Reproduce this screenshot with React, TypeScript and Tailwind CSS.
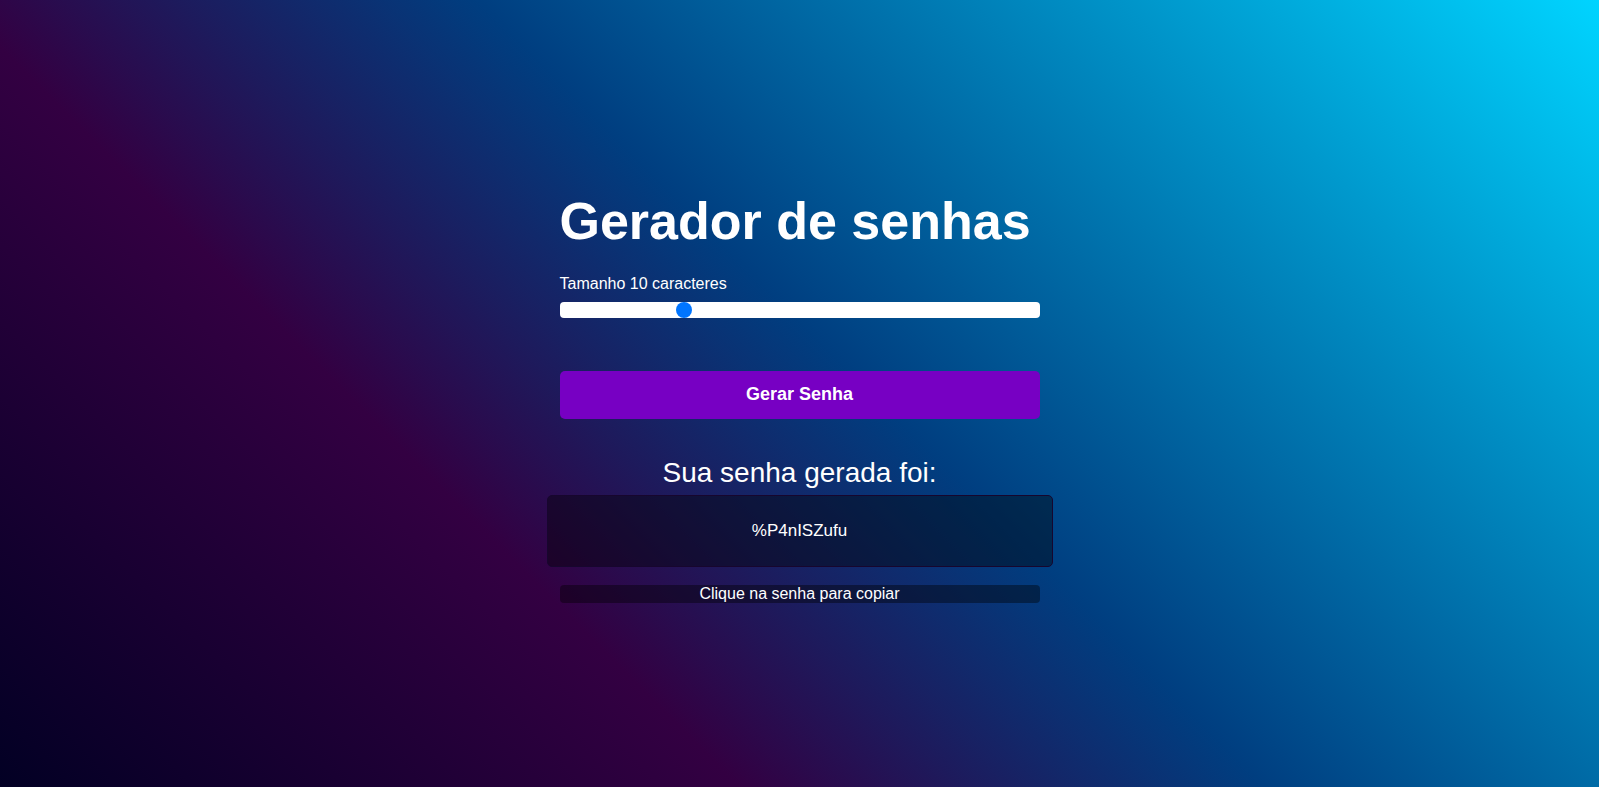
import React, { useState } from 'react';

const CHARS = 'abcdefghijklmnopqrstuvwxyzABCDEFGHIJKLMNOPQRSTUVWXYZ0123456789!@#$%&*';

const App: React.FC = () => {
  const [size, setSize] = useState(10);
  const [password, setPassword] = useState('%P4nISZufu');

  // Build a fresh password of the chosen length
  const generate = () => {
    let result = '';
    for (let i = 0; i < size; i++) {
      result += CHARS.charAt(Math.floor(Math.random() * CHARS.length));
    }
    setPassword(result);
  };

  const copy = () => {
    navigator.clipboard?.writeText(password).catch(() => {});
  };

  return (
    <div
      className="min-h-screen w-full flex items-center justify-center text-white bg-[linear-gradient(45deg,#020024_0%,#330042_31%,#003e80_53%,#00d4ff_100%)]"
      style={{ fontFamily: '"Liberation Sans", Arial, sans-serif' }}
    >
      <main className="w-[480px] pt-[6px] flex flex-col">
        <h1 className="text-[52px] font-bold leading-[60px]">Gerador de senhas</h1>

        <div className="mt-[24px] flex flex-col">
          <span className="text-base leading-[18px]">Tamanho {size} caracteres</span>
          <input
            type="range"
            min={4}
            max={28}
            value={size}
            onChange={(e) => setSize(Number(e.target.value))}
            className="mt-[9px] w-full h-4 appearance-none bg-white rounded-[4px] outline-none cursor-pointer [&::-webkit-slider-thumb]:appearance-none [&::-webkit-slider-thumb]:w-4 [&::-webkit-slider-thumb]:h-4 [&::-webkit-slider-thumb]:rounded-full [&::-webkit-slider-thumb]:bg-[#0075ff] [&::-moz-range-thumb]:w-4 [&::-moz-range-thumb]:h-4 [&::-moz-range-thumb]:rounded-full [&::-moz-range-thumb]:border-0 [&::-moz-range-thumb]:bg-[#0075ff]"
          />
        </div>

        <button
          type="button"
          onClick={generate}
          className="mt-[53px] h-12 w-full rounded-[5px] bg-[#7700c3] text-[18px] font-bold text-white"
        >
          Gerar Senha
        </button>

        <h2 className="mt-[38px] text-center text-[28px] leading-[32px]">Sua senha gerada foi:</h2>

        <div
          onClick={copy}
          className="-mx-[13px] mt-[6px] h-[72px] flex items-center justify-center rounded-[5px] border border-[#17062e] bg-black/40 text-[17px] cursor-pointer"
        >
          {password}
        </div>

        <div className="mt-[18px] h-[18px] flex items-center justify-center rounded-[4px] bg-black/40 text-base leading-[18px]">
          Clique na senha para copiar
        </div>
      </main>
    </div>
  );
};

export default App;
